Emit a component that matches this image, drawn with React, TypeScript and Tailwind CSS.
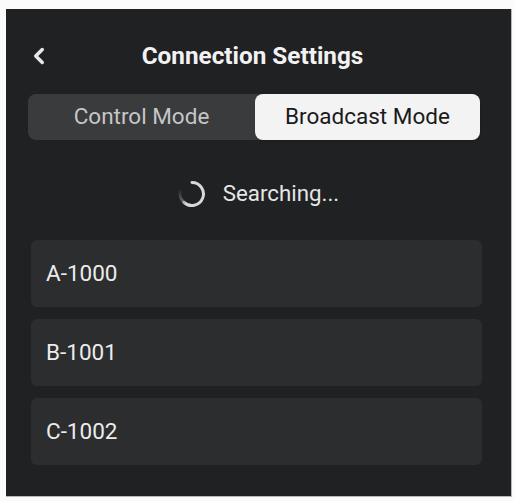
import { ChevronLeft } from 'lucide-react'

const devices = ['A-1000', 'B-1001', 'C-1002']

function Spinner() {
  return (
    <svg width="28" height="28" viewBox="0 0 28 28" className="shrink-0">
      <defs>
        <linearGradient id="tail" x1="0" y1="1" x2="0" y2="0">
          <stop offset="0" stopColor="#9a9b9d" stopOpacity="0.6" />
          <stop offset="1" stopColor="#9a9b9d" stopOpacity="0" />
        </linearGradient>
      </defs>
      <path d="M14 2.5 A11.5 11.5 0 1 1 6 22.3" fill="none" stroke="#d8d8d8" strokeWidth="3" strokeLinecap="round" />
      <path d="M6 22.3 A11.5 11.5 0 0 1 3 9" fill="none" stroke="url(#tail)" strokeWidth="3" strokeLinecap="round" />
    </svg>
  )
}

export default function App() {
  return (
    <div className="w-[515px] h-[501px] bg-[#fbfbfb] pt-[9px] pl-[6px]" style={{ fontFamily: 'Roboto, "Noto Sans", sans-serif' }}>
      <div className="w-[506px] h-[488px] bg-[#202123] flex flex-col border-r border-b border-[#b8b8b8]">
        <div className="h-[85px] pt-[9px] flex items-center relative">
          <ChevronLeft className="absolute left-[20px] w-[26px] h-[26px] text-[#e8e8e8]" strokeWidth={3.2} />
          <h1 className="w-full text-center text-[24.3px] font-bold text-[#f2f2f2] pr-[12px]">Connection Settings</h1>
        </div>

        <div className="ml-[22px] w-[452px] h-[46px] rounded-lg bg-[#3a3b3d] flex">
          <button className="flex-1 text-[22.5px] text-[#c6c6c6]">Control Mode</button>
          <button className="w-[225px] rounded-lg bg-[#f3f3f3] text-[22.5px] text-[#1a1a1a] shadow">Broadcast Mode</button>
        </div>

        <div className="h-[100px] pt-[8px] flex items-center justify-center gap-[17px]">
          <Spinner />
          <span className="text-[22.3px] text-[#e6e6e6]">Searching...</span>
        </div>

        <div className="ml-[25px] w-[451px] flex flex-col gap-[12px]">
          {devices.map((d) => (
            <div key={d} className="h-[67px] rounded-md bg-[#2c2d2f] flex items-center pl-[15px] text-[22.5px] text-[#ececec]">
              {d}
            </div>
          ))}
        </div>
      </div>
    </div>
  )
}
